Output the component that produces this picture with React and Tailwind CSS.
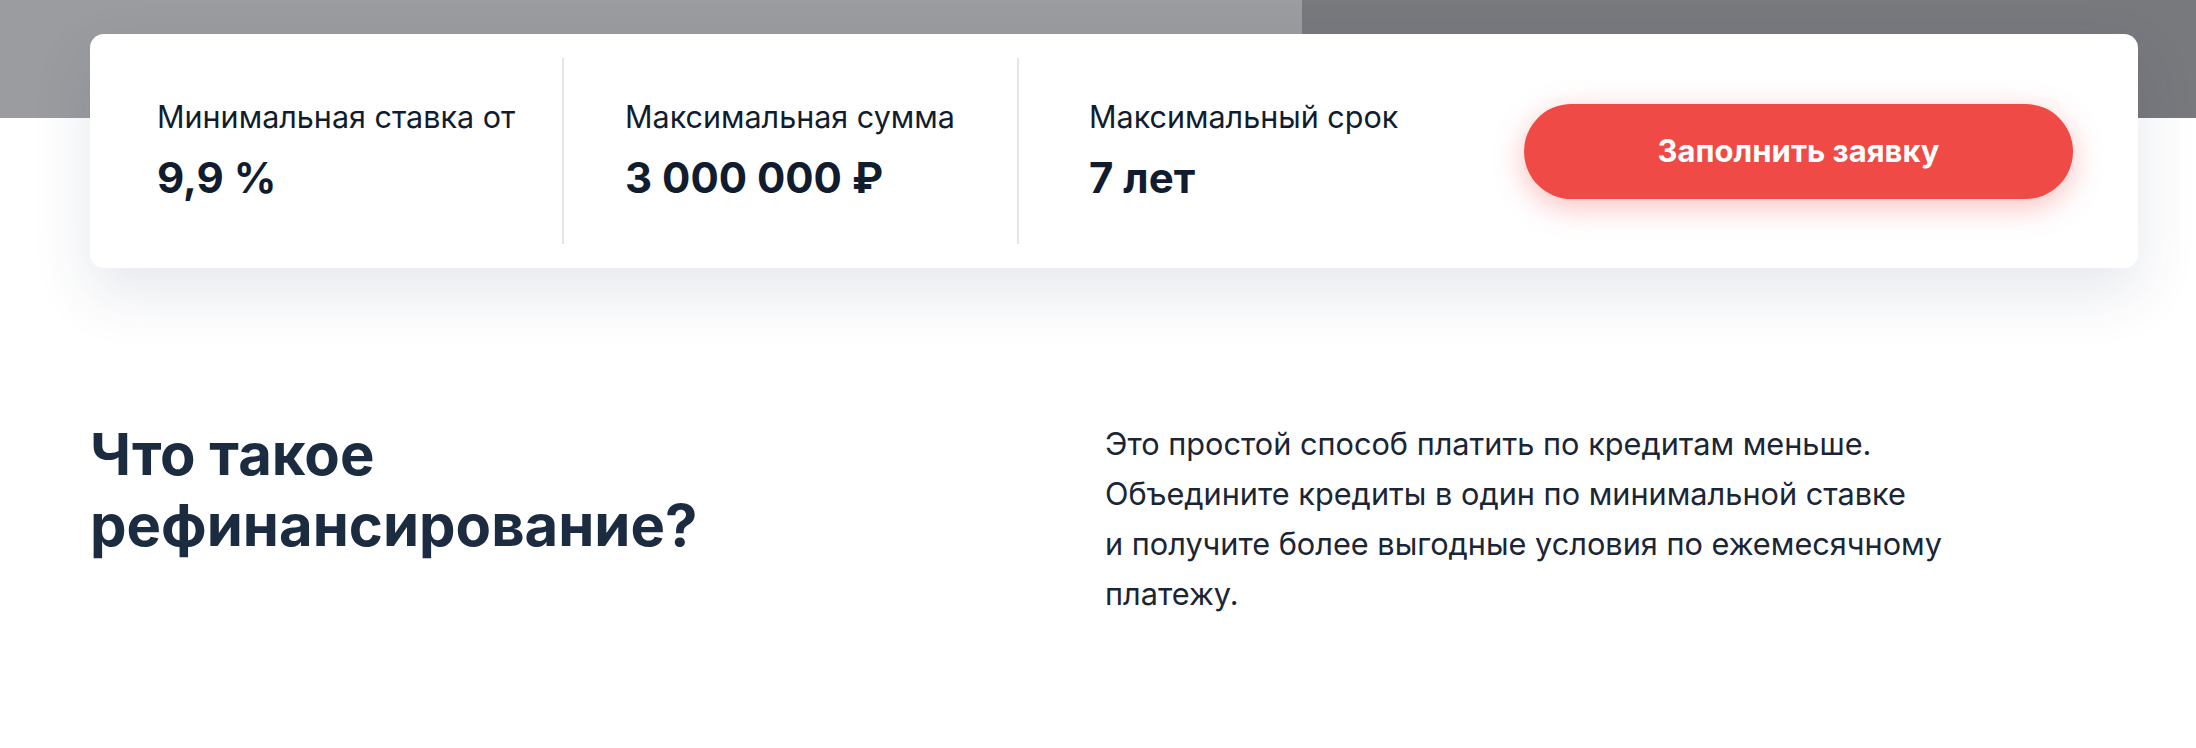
export default function App() {
  const font = { fontFamily: "Inter, 'Noto Sans', sans-serif" };
  return (
    <div className="min-h-[748px] w-[2196px] bg-white" style={font}>
      <div className="flex h-[118px]">
        <div className="w-[1302px] bg-[#9a9c9f]" />
        <div className="flex-1 bg-[#78797d]" />
      </div>

      <div className="relative z-10 -mt-[84px] ml-[90px] flex h-[234px] w-[2048px] items-stretch rounded-[14px] bg-white py-6 shadow-[0_24px_60px_rgba(40,60,100,0.12)]">
        <div className="flex w-[472px] flex-col justify-center pl-[67px]">
          <div className="text-[30.5px] leading-[36px] text-[#111d2e]">Минимальная ставка от</div>
          <div className="mt-[18px] text-[42px] font-bold leading-[50px] text-[#111d2e]">9,9 %</div>
        </div>
        <div className="flex w-[455px] flex-col justify-center border-l-2 border-[#e3e5e8] pl-[61px]">
          <div className="text-[30.5px] leading-[36px] text-[#111d2e]">Максимальная сумма</div>
          <div className="mt-[18px] text-[42px] font-bold leading-[50px] text-[#111d2e]">3 000 000 ₽</div>
        </div>
        <div className="flex flex-1 flex-col justify-center border-l-2 border-[#e3e5e8] pl-[70px]">
          <div className="text-[30.5px] leading-[36px] text-[#111d2e]">Максимальный срок</div>
          <div className="mt-[18px] text-[42px] font-bold leading-[50px] text-[#111d2e]">7 лет</div>
        </div>
        <div className="flex items-center pr-[65px]">
          <button className="flex h-[95px] w-[549px] items-center justify-center rounded-full bg-[#ef4a45] text-[31px] font-bold text-white shadow-[0_8px_30px_rgba(239,74,69,0.35)]">
            Заполнить заявку
          </button>
        </div>
      </div>

      <div className="ml-[90px] mt-[151px] flex w-[2048px]">
        <h2 className="w-[1015px] text-[58px] font-bold leading-[71px] text-[#1b2b40]">
          Что такое
          <br />
          рефинансирование?
        </h2>
        <p className="whitespace-nowrap text-[30.7px] leading-[50px] text-[#1a2535]">
          Это простой способ платить по кредитам меньше.
          <br />
          Объедините кредиты в один по минимальной ставке
          <br />
          и получите более выгодные условия по ежемесячному
          <br />
          платежу.
        </p>
      </div>
    </div>
  );
}
